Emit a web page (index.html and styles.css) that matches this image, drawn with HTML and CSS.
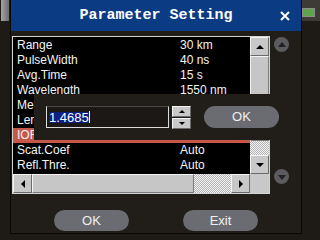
FILE: index.html
```html
<!DOCTYPE html>
<html lang="en">
<head>
    <meta charset="UTF-8">
    <title>Parameter Setting</title>
    <link rel="stylesheet" href="styles.css">
</head>
<body>
    <div class="screen">
        <div class="side side-left"><div class="side-thumb"></div></div>

        <div class="dialog">
            <div class="titlebar">
                <span></span>
                <span class="title">Parameter Setting</span>
                <span class="close">
                    <svg width="10" height="10" viewBox="0 0 10 10"><path d="M1 1L9 9M9 1L1 9" stroke="#fff" stroke-width="2"/></svg>
                </span>
            </div>

            <div class="body">
                <div class="listbox">
                    <div class="list-main">
                        <div class="rows">
                            <div class="row"><span class="label">Range</span><span>30 km</span></div>
                            <div class="row"><span class="label">PulseWidth</span><span>40 ns</span></div>
                            <div class="row"><span class="label">Avg.Time</span><span>15 s</span></div>
                            <div class="row"><span class="label">Wavelength</span><span>1550 nm</span></div>
                            <div class="row"><span class="label">Measure Mode</span><span>Average</span></div>
                            <div class="row"><span class="label">Length Unit</span><span>km</span></div>
                            <div class="row selected"><span class="label">IOR</span><span>1.4685</span></div>
                            <div class="row"><span class="label">Scat.Coef</span><span>Auto</span></div>
                            <div class="row"><span class="label">Refl.Thre.</span><span>Auto</span></div>
                        </div>
                        <div class="vscroll">
                            <div class="sb-btn"><i class="tri tri-up"></i></div>
                            <div class="sb-thumb v-thumb"></div>
                            <div class="track"></div>
                            <div class="sb-btn"><i class="tri tri-down"></i></div>
                        </div>
                    </div>
                    <div class="hscroll">
                        <div class="sb-btn"><i class="tri tri-left"></i></div>
                        <div class="sb-thumb h-thumb"></div>
                        <div class="track"></div>
                        <div class="sb-btn"><i class="tri tri-right"></i></div>
                        <div class="corner"></div>
                    </div>
                </div>

                <div class="pager">
                    <div class="circle"><i class="ctri ctri-up"></i></div>
                    <div class="circle"><i class="ctri ctri-down"></i></div>
                </div>
            </div>

            <div class="footer">
                <div class="pill">OK</div>
                <div class="pill">Exit</div>
            </div>

            <!-- editor popup over the IOR row -->
            <div class="popup">
                <div class="field"><span class="sel">1.4685</span><span class="caret"></span></div>
                <div class="spin">
                    <div class="sb-btn small"><i class="tri tri-up small"></i></div>
                    <div class="sb-btn small"><i class="tri tri-down small"></i></div>
                </div>
                <div class="pill popup-ok">OK</div>
            </div>
        </div>

        <div class="side side-right"><div class="side-thumb"><div class="led"></div></div></div>
    </div>
</body>
</html>
```

FILE: styles.css
```css
/* Estilos gerais */
body {
    margin: 0;
    background: #1e1a16;
    font-family: 'Liberation Sans', Arial, sans-serif;
}

.screen {
    display: flex;
    width: 320px;
    height: 240px;
    overflow: hidden;
}

.side-left {
    width: 10px;
}

.side-left .side-thumb {
    margin-left: 1px;
    width: 8px;
    height: 21px;
    background: linear-gradient(90deg, #a4a4a4, #6c6c6c);
}

.side-right {
    width: 18px;
}

.side-right .side-thumb {
    height: 21px;
    background: #3e3a36;
    padding-top: 8px;
    box-sizing: border-box;
}

.led {
    width: 11px;
    height: 7px;
    border: 1px solid #8c8c8c;
    background: #5ea44c;
}

/* Janela de dialogo */
.dialog {
    position: relative;
    width: 290px;
    height: 233px;
    border: 1px solid #0a0806;
    border-top: 0;
    background: #211d19;
    display: flex;
    flex-direction: column;
}

.titlebar {
    height: 31px;
    background: #0b3b82;
    color: #fff;
    display: grid;
    grid-template-columns: 1fr auto 1fr;
    align-items: center;
}

.title {
    font: bold 15px 'Liberation Mono', monospace;
}

.close {
    justify-self: end;
    margin-right: 11px;
    display: flex;
}

.body {
    display: flex;
    padding-top: 5px;
}

/* Lista de parametros */
.listbox {
    margin-left: 1px;
    width: 256px;
    height: 156px;
    border: 1px solid #d4d4d4;
    background: #000;
    display: flex;
    flex-direction: column;
}

.list-main {
    display: flex;
    height: 137px;
}

.rows {
    flex: 1;
    padding-top: 1px;
    overflow: hidden;
}

.row {
    display: flex;
    height: 15px;
    line-height: 15px;
    font-size: 12px;
    color: #f4f4f4;
    white-space: nowrap;
}

.row .label {
    width: 163px;
    padding-left: 4px;
}

.row.selected {
    background: #c4584a;
}

.vscroll {
    width: 19px;
    display: flex;
    flex-direction: column;
}

.hscroll {
    display: flex;
    height: 19px;
}

.sb-btn {
    width: 19px;
    height: 19px;
    box-sizing: border-box;
    background: #c8c8c8;
    border: 1px solid;
    border-color: #f4f4f4 #6a6a6a #6a6a6a #f4f4f4;
    display: flex;
    align-items: center;
    justify-content: center;
    flex-shrink: 0;
}

.sb-btn.small {
    height: 11px;
}

.sb-thumb {
    background: #c6c6c6;
    box-sizing: border-box;
    border: 1px solid;
    border-color: #f4f4f4 #7a7a7a #7a7a7a #f4f4f4;
}

.v-thumb {
    height: 85px;
}

.h-thumb {
    width: 162px;
}

.track {
    flex: 1;
    background: repeating-conic-gradient(#b4b4b4 0% 25%, #f2f2f2 0% 50%) 0 0 / 2px 2px;
}

.corner {
    width: 19px;
    background: #c8c8c8;
}

.tri {
    width: 0;
    height: 0;
}

.tri-up {
    border-left: 4px solid transparent;
    border-right: 4px solid transparent;
    border-bottom: 4px solid #000;
}

.tri-down {
    border-left: 4px solid transparent;
    border-right: 4px solid transparent;
    border-top: 4px solid #000;
}

.tri-up.small {
    border-width: 0 3px 3px;
}

.tri-down.small {
    border-width: 3px 3px 0;
}

.tri-left {
    border-top: 4px solid transparent;
    border-bottom: 4px solid transparent;
    border-right: 4px solid #000;
}

.tri-right {
    border-top: 4px solid transparent;
    border-bottom: 4px solid transparent;
    border-left: 4px solid #000;
}

/* Botoes redondos laterais */
.pager {
    margin-left: 4px;
    padding: 1px 0 10px;
    display: flex;
    flex-direction: column;
    justify-content: space-between;
}

.circle {
    width: 15px;
    height: 15px;
    border-radius: 50%;
    background: #5b5b60;
    display: flex;
    align-items: center;
    justify-content: center;
}

.ctri {
    width: 0;
    height: 0;
    border-left: 4px solid transparent;
    border-right: 4px solid transparent;
}

.ctri-up {
    border-bottom: 5px solid #222;
    margin-top: -1px;
}

.ctri-down {
    border-top: 5px solid #222;
    margin-top: 1px;
}

/* Rodape */
.footer {
    display: flex;
    justify-content: center;
    gap: 54px;
    margin-top: 16px;
}

.pill {
    width: 75px;
    height: 21px;
    line-height: 21px;
    border-radius: 11px;
    background: #6a6c72;
    color: #f0f0f0;
    font-size: 13px;
    text-align: center;
}

/* Editor sobreposto */
.popup {
    position: absolute;
    left: 23px;
    top: 94px;
    width: 266px;
    height: 46px;
    box-sizing: border-box;
    padding: 12px 0 0 12px;
    background: #211d19;
    display: flex;
    align-items: flex-start;
}

.field {
    width: 123px;
    height: 22px;
    box-sizing: border-box;
    border: 1px solid #dcdcdc;
    border-top-color: #4a4643;
    background: #1c1815;
    padding-left: 2px;
    display: flex;
    align-items: center;
}

.sel {
    background: #0c1f82;
    color: #fff;
    font-size: 13px;
    line-height: 11px;
    height: 11px;
}

.caret {
    width: 1px;
    height: 12px;
    background: #fff;
}

.spin {
    margin-left: 3px;
    display: flex;
    flex-direction: column;
    gap: 1px;
}

.popup-ok {
    margin-left: 13px;
    height: 22px;
    line-height: 22px;
}
```
